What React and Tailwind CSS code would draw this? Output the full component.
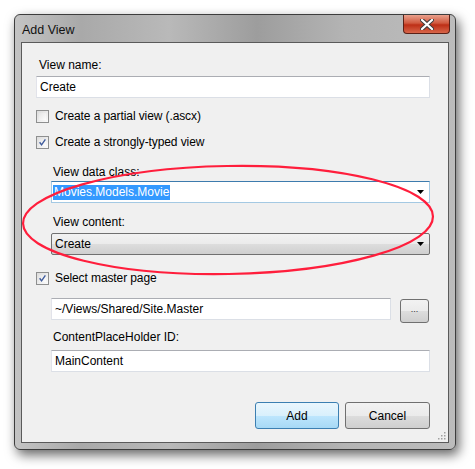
import React from 'react';

const font = { fontFamily: '"Liberation Sans", Arial, sans-serif' };

const CheckBox = ({ checked }) => (
  <div className="w-[13px] h-[13px] border border-[#8e8f8f] bg-gradient-to-br from-[#dcdcdc] to-[#fbfbfb] p-[2px] flex items-center justify-center">
    <div className="w-full h-full bg-gradient-to-br from-[#e6e6e6] to-[#fdfdfd] flex items-center justify-center">
      {checked && (
        <svg width="9" height="9" viewBox="0 0 9 9">
          <path d="M0.8 4.2 L3.3 7.6 L8.2 0.4" fill="none" stroke="#3f5b9c" strokeWidth="1.8" />
        </svg>
      )}
    </div>
  </div>
);

const CheckRow = ({ checked, label, className = '' }) => (
  <div className={`flex items-center h-[16px] gap-[6px] ${className}`}>
    <CheckBox checked={checked} />
    <span className="tracking-[-0.1px]">{label}</span>
  </div>
);

const TextBox = ({ value, className = '' }) => (
  <div className={`h-[22px] bg-white border border-[#dbdfe6] border-t-[#abadb3] border-l-[#e2e3ea] flex items-center pl-[3px] ${className}`}>
    {value}
  </div>
);

const Arrow = () => (
  <svg width="7" height="4" viewBox="0 0 7 4" className="mr-[5px]">
    <polygon points="0,0 7,0 3.5,4" fill="#000" />
  </svg>
);

const Label = ({ children, className = '' }) => (
  <div className={`h-[16px] flex items-center ${className}`}>{children}</div>
);

const Button = ({ children, primary, className = '' }) => (
  <div
    className={`rounded-[3px] border flex items-center justify-center ${
      primary
        ? 'border-[#3c7fb1] bg-[linear-gradient(#eaf6fd_0%,#d9f0fc_50%,#bee6fd_51%,#a7d9f5_100%)]'
        : 'border-[#707070] bg-[linear-gradient(#f2f2f2_0%,#ebebeb_50%,#dddddd_51%,#cfcfcf_100%)]'
    } ${className}`}
  >
    {children}
  </div>
);

export default function App() {
  return (
    <div className="w-[475px] h-[469px] bg-white pt-[14px] pl-[14px] relative overflow-hidden text-[12px] text-black" style={font}>
      <div className="w-[442px] h-[436px] rounded-[6px] border border-[#3d3d3d] shadow-[3px_5px_12px_rgba(0,0,0,0.6)] bg-[linear-gradient(90deg,#c4c4c4_0%,#a9a9a9_15%,#b9b9b9_35%,#9d9d9d_55%,#b4b4b4_75%,#bcbcbc_100%)] flex flex-col">
        <div className="h-[27px] flex items-start justify-between">
          <div className="pl-[7px] pt-[6px] text-[12.5px] text-[#111]">Add View</div>
          <div className="mr-[5px] w-[47px] h-[19px] rounded-b-[4px] border border-t-0 border-[#5a2117] bg-[linear-gradient(#e9a08c_0%,#d0593f_45%,#bd2f16_55%,#d8664a_100%)] flex items-center justify-center">
            <svg width="14" height="11" viewBox="0 0 14 11">
              <path d="M2 1 L12 10 M12 1 L2 10" stroke="#3b3b3b" strokeWidth="4.2" strokeLinecap="round" />
              <path d="M2 1 L12 10 M12 1 L2 10" stroke="#fff" strokeWidth="2.3" strokeLinecap="round" />
            </svg>
          </div>
        </div>
        <div className="mx-[6px] mb-[6px] flex-1 border border-[#5a5a5a] bg-[#f0f0f0] pl-[14px] flex flex-col relative">
          <Label className="mt-[14px] pl-[3px]">View name:</Label>
          <TextBox value="Create" className="mt-[3px] w-[394px]" />
          <CheckRow label="Create a partial view (.ascx)" className="mt-[10px]" />
          <CheckRow checked label="Create a strongly-typed view" className="mt-[10px]" />
          <div className="pl-[15px] flex flex-col">
            <Label className="mt-[14px] pl-[2px]">View data class:</Label>
            <div className="mt-[1px] w-[379px] h-[22px] bg-white border border-[#a4c9e3] border-t-[#3d7bad] flex items-center justify-between pl-[1px]">
              <span className="bg-[#3399ff] text-white px-[1px] leading-[15px]">Movies.Models.Movie</span>
              <Arrow />
            </div>
            <Label className="mt-[11px] pl-[2px]">View content:</Label>
            <div className="mt-[3px] w-[379px] h-[22px] rounded-[2px] border border-[#707070] bg-[linear-gradient(#f2f2f2_0%,#ebebeb_50%,#dddddd_51%,#cfcfcf_100%)] flex items-center justify-between pl-[3px]">
              <span>Create</span>
              <Arrow />
            </div>
          </div>
          <CheckRow checked label="Select master page" className="mt-[15px]" />
          <div className="pl-[15px] flex flex-col">
            <div className="mt-[12px] h-[25px] flex items-start">
              <TextBox value="~/Views/Shared/Site.Master" className="w-[340px]" />
              <Button className="ml-[9px] mt-[1px] w-[29px] h-[24px] text-[9px] pb-[2px] text-[#333]">...</Button>
            </div>
            <Label className="mt-[6px] pl-[2px]">ContentPlaceHolder ID:</Label>
            <TextBox value="MainContent" className="mt-[5px] w-[379px]" />
            <div className="mt-[30px] w-[379px] flex justify-end gap-[6px]">
              <Button primary className="w-[84px] h-[27px]">Add</Button>
              <Button className="w-[85px] h-[27px]">Cancel</Button>
            </div>
          </div>
          <svg width="9" height="9" viewBox="0 0 9 9" className="absolute right-[2px] bottom-[2px]">
            {[[7, 1], [7, 4], [4, 4], [7, 7], [4, 7], [1, 7]].map(([x, y]) => (
              <rect key={`${x}-${y}`} x={x} y={y} width="1.5" height="1.5" fill="#a0a0a0" />
            ))}
          </svg>
        </div>
      </div>
      <svg width="475" height="469" className="absolute left-0 top-0 pointer-events-none">
        <ellipse cx="228" cy="220" rx="205" ry="54" fill="none" stroke="#ff1e3c" strokeWidth="2.2" transform="rotate(-1 228 220)" />
      </svg>
    </div>
  );
}
